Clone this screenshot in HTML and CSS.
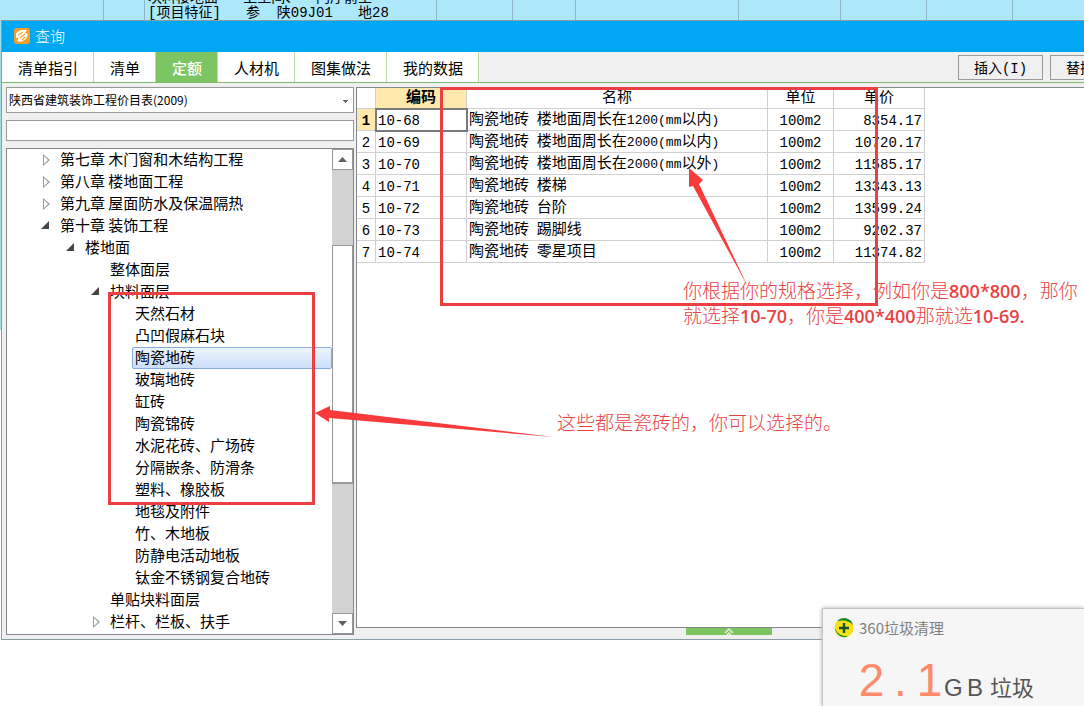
FILE: index.html
```
<!DOCTYPE html>
<html lang="zh-CN">
<head>
<meta charset="utf-8">
<title>查询</title>
<link rel="stylesheet" href="styles.css">
</head>
<body>
<div class="sheet">
  <div class="sheet-cell w103"></div><div class="sheet-cell w41"></div>
  <div class="sheet-cell w292 sheet-text"><span>块料楼地面&nbsp;&nbsp; 卫生间、&nbsp; 门厅前室</span><span>[项目特征]&nbsp;&nbsp; 参&nbsp; 陕09J01&nbsp;&nbsp; 地28</span></div>
  <div class="sheet-cell w76"></div><div class="sheet-cell w63"></div><div class="sheet-cell w163"></div><div class="sheet-cell w102"></div><div class="sheet-cell w86"></div><div class="sheet-cell w86"></div>
</div>
<main class="window">
  <header class="titlebar">
    <svg class="logo" width="16" height="16" viewBox="0 0 16 16" aria-hidden="true"><rect width="16" height="16" rx="3" fill="#f2a02c"/><path d="M2 5 7 2 13 2 11 5 14 6 12 11 7 14 3 13 5 10 2 10Z" fill="#fff"/><path d="M4 7 9 4M6 10l5-4M8 12l3-3" stroke="#f2a02c" stroke-width="1.1"/></svg>
    <h1>查询</h1>
  </header>
  <nav class="toolbar">
    <div class="tabs">
      <button class="tab t1">清单指引</button><button class="tab t2">清单</button><button class="tab t3 active">定额</button><button class="tab t4">人材机</button><button class="tab t5">图集做法</button><button class="tab t6">我的数据</button>
    </div>
    <div class="actions"><button class="action">插入(I)</button><button class="action">替换(R)</button></div>
  </nav>
  <div class="content">
    <aside class="side">
      <select class="combo" aria-label="定额库"><option>陕西省建筑装饰工程价目表(2009)</option></select>
      <input class="search" type="text" aria-label="搜索">
      <div class="tree-box">
        <ul class="tree">
          <li class="l1"><i class="shut"></i>第七章 木门窗和木结构工程</li>
          <li class="l1"><i class="shut"></i>第八章 楼地面工程</li>
          <li class="l1"><i class="shut"></i>第九章 屋面防水及保温隔热</li>
          <li class="l1"><i class="open"></i>第十章 装饰工程</li>
          <li class="l2"><i class="open"></i>楼地面</li>
          <li class="l3"><i></i>整体面层</li>
          <li class="l3"><i class="open"></i>块料面层</li>
          <li class="l4">天然石材</li>
          <li class="l4">凸凹假麻石块</li>
          <li class="l4 selected">陶瓷地砖</li>
          <li class="l4">玻璃地砖</li>
          <li class="l4">缸砖</li>
          <li class="l4">陶瓷锦砖</li>
          <li class="l4">水泥花砖、广场砖</li>
          <li class="l4">分隔嵌条、防滑条</li>
          <li class="l4">塑料、橡胶板</li>
          <li class="l4">地毯及附件</li>
          <li class="l4">竹、木地板</li>
          <li class="l4">防静电活动地板</li>
          <li class="l4">钛金不锈钢复合地砖</li>
          <li class="l3"><i></i>单贴块料面层</li>
          <li class="l3"><i class="shut"></i>栏杆、栏板、扶手</li>
        </ul>
        <div class="scroll"><button class="step" aria-label="向上"><b class="up"></b></button><div class="track"><div class="thumb"></div></div><button class="step" aria-label="向下"><b class="down"></b></button></div>
      </div>
    </aside>
    <section class="main">
      <div class="grid-area">
        <table class="grid">
          <colgroup><col class="c-no"><col class="c-code"><col class="c-name"><col class="c-unit"><col class="c-price"></colgroup>
          <thead><tr><th></th><th class="code-head">编码</th><th>名称</th><th>单位</th><th>单价</th></tr></thead>
          <tbody>
            <tr class="current"><td>1</td><td>10-68</td><td>陶瓷地砖<span> </span>楼地面周长在<span>1200(mm</span>以内<span>)</span></td><td>100m2</td><td>8354.17</td></tr>
            <tr><td>2</td><td>10-69</td><td>陶瓷地砖<span> </span>楼地面周长在<span>2000(mm</span>以内<span>)</span></td><td>100m2</td><td>10720.17</td></tr>
            <tr><td>3</td><td>10-70</td><td>陶瓷地砖<span> </span>楼地面周长在<span>2000(mm</span>以外<span>)</span></td><td>100m2</td><td>11585.17</td></tr>
            <tr><td>4</td><td>10-71</td><td>陶瓷地砖<span> </span>楼梯</td><td>100m2</td><td>13343.13</td></tr>
            <tr><td>5</td><td>10-72</td><td>陶瓷地砖<span> </span>台阶</td><td>100m2</td><td>13599.24</td></tr>
            <tr><td>6</td><td>10-73</td><td>陶瓷地砖<span> </span>踢脚线</td><td>100m2</td><td>9202.37</td></tr>
            <tr><td>7</td><td>10-74</td><td>陶瓷地砖<span> </span>零星项目</td><td>100m2</td><td>11374.82</td></tr>
          </tbody>
        </table>
      </div>
      <footer class="dock"><button class="handle" aria-label="展开"><svg width="12" height="7" viewBox="0 0 12 7"><path d="M2 5 6 1l4 4M4 7l2-2 2 2" fill="none" stroke="#e8f8df" stroke-width="1.3"/></svg></button></footer>
    </section>
  </div>
</main>
<div class="mark mark-tree"></div>
<div class="mark mark-grid"></div>
<svg class="arrows" width="1084" height="706" viewBox="0 0 1084 706" aria-hidden="true"><g fill="#f93a3a"><path d="M689 168 703 180 699 184 748 287 693 186 689 187Z"/><path d="M315 413 330 406V410L553 437 329 418V422Z"/></g></svg>
<p class="note note-grid">你根据你的规格选择，例如你是<b>800*800</b>，那你<br>就选择<b>10-70</b>，你是<b>400*400</b>那就选<b>10-69.</b></p>
<p class="note note-tree">这些都是瓷砖的，你可以选择的。</p>
<aside class="popup">
  <div class="popup-title"><svg width="20" height="20" viewBox="0 0 20 20" aria-hidden="true"><circle cx="10" cy="10" r="9.5" fill="#f7e016"/><path d="M3 3A9.5 9.5 0 0 1 19 7Q14 1 3 3M1 10Q3 18 14 18.500A9.500 9.500 0 0 1 1 10" fill="#138a26"/><path d="M10 5v10M5 10h10" stroke="#17521d" stroke-width="2.4"/></svg><span>360垃圾清理</span></div>
  <div class="amount"><span class="digit">2</span><span class="digit">.</span><span class="digit">1</span><span class="letter">G</span><span class="letter">B</span><span class="junk">垃圾</span></div>
</aside>
</body>
</html>
```
FILE: styles.css
```
* { box-sizing: border-box; }
html, body { height: 100%; }
body { margin: 0; display: flex; flex-direction: column; position: relative; overflow: hidden; background: #fff linear-gradient(#a5dce6, #a5dce6) no-repeat 0 0 / 1px 330px; color: #000; font: 15px/20px "Noto Sans CJK SC", sans-serif; }
button, input, select { font: inherit; color: inherit; margin: 0; padding: 0; border-radius: 0; }
.sheet { display: flex; flex: none; height: 20px; background: #ade8fa; overflow: hidden; }
.sheet-cell { flex: none; border-right: 1px solid #8fb6c8; }
.w103 { width: 104px; }
.w41 { width: 41px; }
.w292 { width: 292px; }
.w76 { width: 76px; }
.w63 { width: 63px; }
.w163 { width: 163px; }
.w102 { width: 102px; }
.w86 { width: 86px; }
.sheet-text { display: flex; flex-direction: column; justify-content: flex-end; padding-left: 3px; font: 14px/16px "Liberation Mono", "Noto Sans CJK SC", monospace; white-space: nowrap; }
.sheet-text span:last-child { line-height: 14px; }
.window { display: flex; flex-direction: column; flex: none; margin-left: 1px; border: solid #8a9ca4; border-width: 1px 0 1px 1px; background: #f0f0f0; }
.titlebar { display: flex; align-items: center; gap: 5px; flex: none; height: 31px; padding: 0 12px 1px; background: #00a8f3; color: #fff; }
.titlebar h1 { margin: 0; font-size: 15px; font-weight: 300; }
.toolbar { display: flex; justify-content: space-between; flex: none; height: 31px; border-bottom: 1px solid #7fb96f; overflow: hidden; }
.tabs, .actions { display: flex; flex: none; }
.tab { padding: 2px 0 0 1px; border: 0; border-right: 1px solid #b9dba6; background: #fff; }
.tab.active { background: #7dc462; color: #fff; font-weight: 500; }
.t1 { width: 92px; }
.t2 { width: 62px; }
.t3 { width: 62px; }
.t4 { width: 77px; }
.t5 { width: 92px; }
.t6 { width: 92px; }
.actions { gap: 7px; padding-top: 3px; margin-right: -51px; }
.action { width: 85px; height: 25px; padding-top: 2px; border: 1px solid #999; background: #f0f0f0; font: 14px/20px "Liberation Mono", "Noto Sans CJK SC", monospace; }
.content { display: flex; padding: 4px 0 0 4px; gap: 2px; }
.side { display: flex; flex-direction: column; flex: none; width: 348px; padding-bottom: 4px; }
.combo { appearance: none; flex: none; height: 26px; padding-left: 2px; border: 1px solid #999; background: linear-gradient(#666, #666) no-repeat right 5px top 12px / 5px 1px, linear-gradient(#666, #666) no-repeat right 6px top 13px / 3px 1px, linear-gradient(#666, #666) no-repeat right 7px top 14px / 1px 1px, #fff; font-size: 12px; }
.search { flex: none; height: 21px; margin: 7px 0; border: 1px solid #999; background: #fff; }
.tree-box { display: flex; border: 1px solid #828790; background: #fff; }
.tree { flex: 1; margin: 0; padding: 0 0 1px; list-style: none; overflow: hidden; white-space: nowrap; }
.tree li { display: flex; align-items: center; height: 22px; padding-bottom: 2px; }
.tree i { flex: none; width: 19px; height: 12px; }
.l1 { padding-left: 34px; }
.l2 { padding-left: 59px; }
.l3 { padding-left: 84px; }
.l4 { padding-left: 3px; margin-left: 125px; }
.shut::before { content: ""; display: block; width: 7px; height: 12px; margin: 1px 0 0 2px; background: #999; clip-path: polygon(0 0, 100% 50%, 0 100%, 0 0, 1px 2px, 1px 10px, 5px 6px, 1px 2px); }
.open::before { content: ""; display: block; width: 8px; height: 8px; margin-top: 2px; background: #444; clip-path: polygon(100% 0, 100% 100%, 0 100%); }
.tree .selected { padding-left: 2px; border: 1px solid #84acdd; border-radius: 2px; background: linear-gradient(#edf5fe, #cbdffa); }
.scroll { display: flex; flex-direction: column; flex: none; width: 21px; background: #d2d2d2; }
.step { display: grid; place-items: center; flex: none; width: 21px; height: 21px; border: 1px solid #999; background: #fff; }
.step b { width: 9px; height: 5px; background: #606060; }
.up { clip-path: polygon(50% 0, 100% 100%, 0 100%); }
.down { clip-path: polygon(0 0, 100% 0, 50% 100%); }
.track { flex: 1; padding-top: 75px; }
.thumb { height: 239px; border: 1px solid #999; border-width: 1px 1px 2px; background: #fff; }
.main { display: flex; flex-direction: column; flex: 1; min-width: 0; }
.grid-area { flex: 1; border: solid #828790; border-width: 1px 0 1px 1px; background: #fff; }
.grid { width: 568px; border-collapse: separate; border-spacing: 0; table-layout: fixed; font: 14px/18px "Liberation Mono", "Noto Sans CJK SC", monospace; }
.grid th, .grid td { height: 22px; padding: 3px 2px 0; border: solid #d0d0d0; border-width: 0 1px 1px 0; overflow: hidden; white-space: nowrap; font-weight: 400; }
.grid th { height: 21px; padding-top: 2px; font-size: 15px; }
.c-no { width: 19px; }
.c-code { width: 91px; }
.c-name { width: 301px; }
.c-unit { width: 66px; }
.c-price { width: 91px; }
.grid .code-head { background: #ffe9ac; font-weight: 700; }
.grid td:nth-child(1), .grid td:nth-child(4) { text-align: center; }
.grid td:nth-child(3) { font-size: 15px; }
.grid td:nth-child(5) { text-align: right; }
.grid td span { font-size: 13px; }
.grid .current td:first-child { background: #ffe9ac; font-weight: 700; }
.grid .current td:nth-child(2) { outline: 2px solid; outline-color: #777b80; outline-offset: -1px; box-shadow: inset 1px 1px #4d9fb5; }
.dock { display: flex; flex: none; height: 11px; padding-left: 330px; }
.handle { display: grid; place-items: center; width: 86px; height: 7px; border: 0; background: #7dc462; }
.mark { position: absolute; border: 3px solid #ec3f41; }
.mark-tree { left: 108px; top: 292px; width: 207px; height: 213px; }
.mark-grid { left: 440px; top: 87px; width: 438px; height: 219px; }
.arrows { position: absolute; left: 0; top: 0; }
.note { position: absolute; margin: 0; color: #ea4244; font-size: 19px; line-height: 24px; font-weight: 300; white-space: nowrap; }
.note b { font-family: "Open Sans", sans-serif; font-size: 18px; font-weight: 600; }
.note-grid { left: 683px; top: 278px; }
.note-tree { left: 557px; top: 410px; }
.popup { position: absolute; right: 0; bottom: 0; width: 262px; height: 98px; padding: 9px 0 0 11px; border: solid #c4c4c4; border-width: 1px 0 0 1px; background: #f6f6f6; box-shadow: 0 0 4px #aaa; }
.popup-title { display: flex; align-items: center; gap: 5px; height: 20px; color: #808080; }
.amount { display: flex; align-items: baseline; padding-left: 23px; margin-top: 16px; font: 46px/52px "Liberation Sans", sans-serif; color: #555; }
.digit { width: 29px; text-align: center; color: #ff8a6a; }
.letter { width: 23px; font-size: 24px; }
.junk { font: 22px/24px "Noto Sans CJK SC", sans-serif; }
```
